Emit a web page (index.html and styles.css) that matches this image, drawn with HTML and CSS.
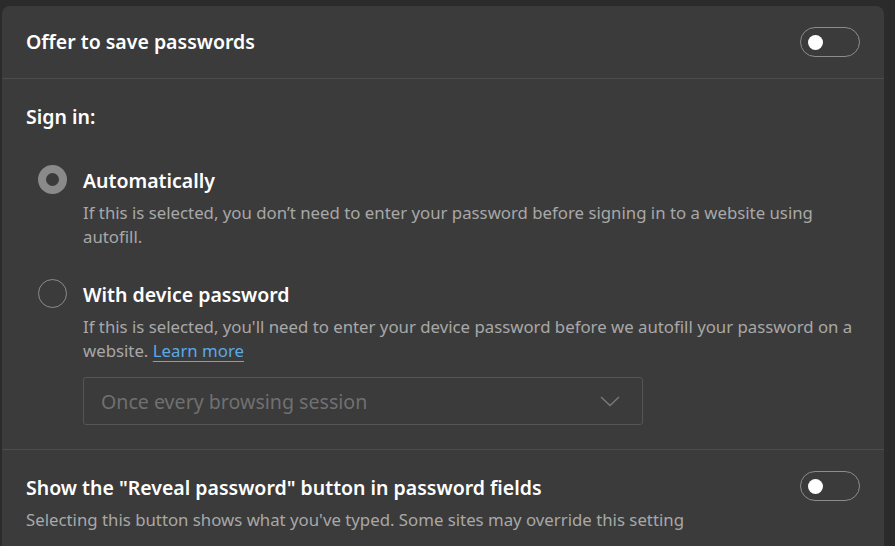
FILE: index.html
```html
<!DOCTYPE html>
<html lang="en">
<head>
<meta charset="utf-8">
<title>Passwords settings</title>
<link rel="stylesheet" href="styles.css">
</head>
<body>
<div class="card">
  <div class="row row-top">
    <div class="title">Offer to save passwords</div>
    <div class="toggle"><span class="knob"></span></div>
  </div>
  <div class="section">
    <div class="title">Sign in:</div>
    <div class="options">
      <div class="option">
        <span class="radio radio-on"></span>
        <div class="option-body">
          <div class="title">Automatically</div>
          <div class="desc">If this is selected, you don’t need to enter your password before signing in to a website using autofill.</div>
        </div>
      </div>
      <div class="option">
        <span class="radio"></span>
        <div class="option-body">
          <div class="title">With device password</div>
          <div class="desc">If this is selected, you'll need to enter your device password before we autofill your password on a website. <a class="link" href="#">Learn more</a></div>
          <div class="select">
            <span class="select-text">Once every browsing session</span>
            <svg class="chevron" width="20" height="11" viewBox="0 0 20 11"><path d="M1 1 L10 9.5 L19 1" fill="none" stroke="#7a7a7a" stroke-width="1.4"/></svg>
          </div>
        </div>
      </div>
    </div>
  </div>
  <div class="row row-bottom">
    <div class="row-text">
      <div class="title">Show the "Reveal password" button in password fields</div>
      <div class="desc">Selecting this button shows what you've typed. Some sites may override this setting</div>
    </div>
    <div class="toggle toggle-b"><span class="knob"></span></div>
  </div>
</div>
</body>
</html>
```
FILE: styles.css
```css
html, body {
  margin: 0;
  padding: 0;
  background: #2b2b2b;
  height: 100%;
  overflow: hidden;
}
body {
  font-family: "Noto Sans", "Open Sans", sans-serif;
  color: #ffffff;
}
.card {
  margin: 6px 11px 0 2px;
  background: #3b3b3b;
  border-radius: 8px 8px 0 0;
  height: 540px;
}
.title {
  font-size: 19.5px;
  font-weight: 600;
  line-height: 28px;
  color: #ffffff;
}
.desc {
  font-size: 16.8px;
  line-height: 24px;
  color: #a8a8a8;
}
.row {
  display: flex;
  justify-content: space-between;
  padding: 0 24px;
}
.row-top {
  height: 72px;
  align-items: center;
  border-bottom: 1px solid #4c4c4c;
}
.toggle {
  width: 58px;
  height: 28px;
  border: 1px solid #8c8c8c;
  border-radius: 15px;
  box-sizing: content-box;
  display: flex;
  align-items: center;
  padding: 0;
  flex: none;
}
.knob {
  width: 15px;
  height: 15px;
  border-radius: 50%;
  background: #ffffff;
  margin-left: 7px;
}
.section {
  padding: 24px 24px 24px 24px;
  border-bottom: 1px solid #4c4c4c;
}
.options {
  margin-top: 36px;
  padding-left: 12px;
  display: flex;
  flex-direction: column;
  gap: 32px;
}
.option {
  display: flex;
  gap: 16px;
}
.radio {
  flex: none;
  width: 29px;
  height: 29px;
  box-sizing: border-box;
  border-radius: 50%;
  border: 1px solid #8c8c8c;
  margin-top: -2px;
}
.radio-on {
  border: 8.5px solid #8a8a8a;
}
.option-body {
  flex: 1;
  margin-right: -4px;
}
.option-body .desc {
  margin-top: 6px;
}
.link {
  color: #5aaae6;
  text-decoration: underline;
  text-decoration-thickness: 1px;
  text-underline-offset: 4px;
}
.select {
  margin-top: 14px;
  width: 560px;
  height: 48px;
  box-sizing: border-box;
  border: 1px solid #555555;
  border-radius: 3px;
  display: flex;
  align-items: center;
  justify-content: space-between;
  padding: 0 22px 0 17px;
}
.select-text {
  font-size: 19.6px;
  color: #707070;
}
.chevron {
  display: block;
}
.row-bottom {
  padding-top: 24px;
}
.row-bottom .desc {
  margin-top: 6px;
}
.toggle-b {
  margin-top: -3px;
}
```
